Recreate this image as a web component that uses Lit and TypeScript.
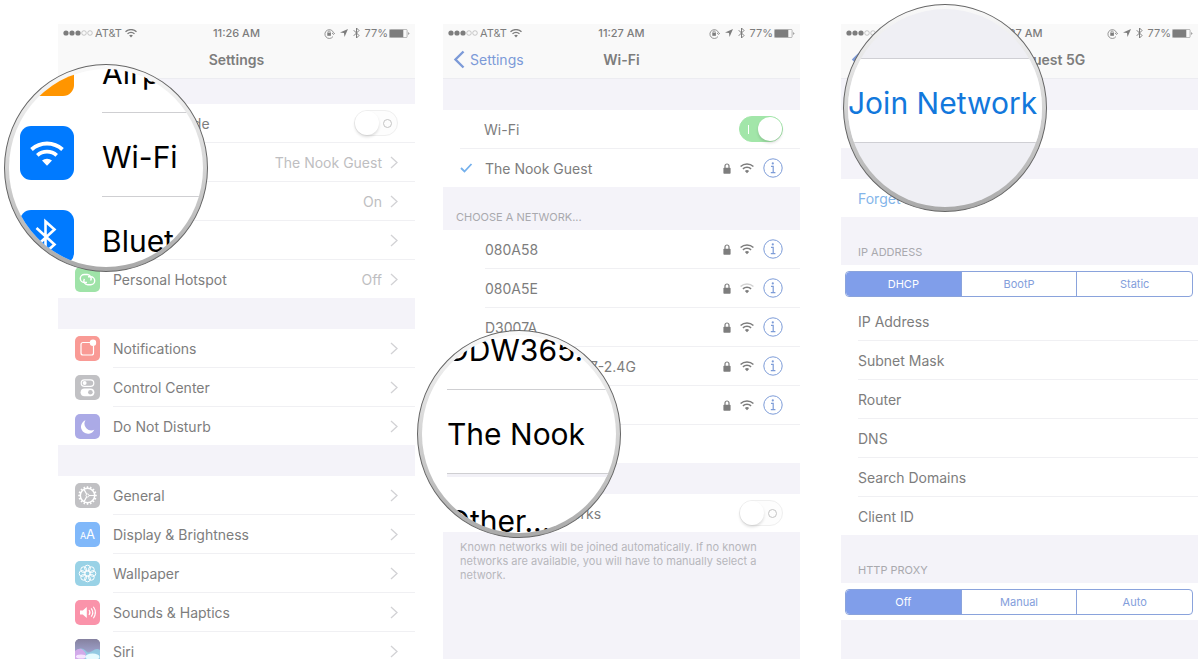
import { LitElement, html, css, svg, nothing } from "lit";
import { customElement, property } from "lit/decorators.js";

const wifi = (weak = false) => html`<svg class="wifi" viewBox="1 2 24 18" aria-hidden="true">
  <path d="M2 7.5a16 16 0 0 1 22 0" fill="none" stroke="currentColor" stroke-width="2.6" opacity=${weak ? 0.35 : 1} />
  <path d="M6 11.7a10.2 10.2 0 0 1 14 0" fill="none" stroke="currentColor" stroke-width="2.6" />
  <path d="M9.3 15.2a5.4 5.4 0 0 1 7.4 0L13 19z" fill="currentColor" />
</svg>`;

const bluetooth = html`<svg class="bt" viewBox="0 0 14 24" aria-hidden="true">
  <path d="M1.5 6.5 12 17l-5 5V2l5 5L1.5 17.5" fill="none" stroke="currentColor" stroke-width="2" />
</svg>`;

const chevron = html`<svg class="chev" viewBox="0 0 8 13" aria-hidden="true">
  <path d="m1 1 6 5.5L1 12" fill="none" stroke="currentColor" stroke-width="1.3" />
</svg>`;

const lock = html`<svg class="lock" viewBox="0 0 8 11" aria-hidden="true">
  <path d="M2 5V3a2 2 0 0 1 4 0v2" fill="none" stroke="currentColor" stroke-width="1.2" />
  <rect x=".4" y="4.7" width="7.2" height="6" rx=".8" fill="currentColor" />
</svg>`;

const teeth = Array.from({ length: 16 }, (_, i) => i * 22.5);
const petals = Array.from({ length: 8 }, (_, i) => (i * Math.PI) / 4);

const glyphs: Record<string, unknown> = {
  airplane: svg`<path d="M5 12.500h15M12.500 5v15" fill="none" stroke="#fff" stroke-width="1.500"/>`,
  wifi: svg`<path d="M5 10.500a11 11 0 0 1 15 0M8 13.500a7 7 0 0 1 9 0" fill="none" stroke="#fff" stroke-width="1.800"/><path d="M10 16a4 4 0 0 1 5 0l-2.500 2.500z" fill="#fff"/>`,
  bluetooth: svg`<path d="m8 8.500 8.500 8-4 3.500V5l4 3.500-8.500 8" fill="none" stroke="#fff" stroke-width="1.300"/>`,
  cellular: svg`<path d="M12.500 11v9M8 6a6 6 0 0 0 0 8M17 6a6 6 0 0 1 0 8" fill="none" stroke="#fff" stroke-width="1.300"/>`,
  hotspot: svg`<g fill="none" stroke="#fff" stroke-width="1.400">
    <path d="M12 15.500H9.300a4 4 0 0 1 0-8h3a4 4 0 0 1 3.300 6"/>
    <path d="M13 9.800h2.700a4 4 0 0 1 0 8h-3a4 4 0 0 1-3.300-6"/></g>`,
  notifications: svg`<path d="M15 6.500H8A2 2 0 0 0 6 8.500v8.500a2 2 0 0 0 2 2h8.500a2 2 0 0 0 2-2V10" fill="none" stroke="#fff" stroke-width="1.200"/>
    <circle cx="18" cy="6.800" r="3.200" fill="#fff"/>`,
  control: svg`<rect x="6.200" y="4.800" width="12.600" height="6.600" rx="3.300" fill="none" stroke="#fff" stroke-width="1.200"/>
    <circle cx="9.600" cy="8.100" r="2" fill="#fff"/>
    <rect x="5.600" y="13.400" width="13.800" height="7.800" rx="3.900" fill="#fff"/><circle cx="15.400" cy="17.300" r="2.300" fill="#c0c0c3"/>`,
  moon: svg`<path d="M10.500 6.200a7 7 0 1 0 8.800 9.600 6.800 6.800 0 0 1-8.800-9.600z" fill="#fff"/>`,
  general: svg`<g fill="none" stroke="#fff">
    <circle cx="12.500" cy="12.500" r="7.200" stroke-width="1.500"/>
    ${teeth.map((a) => svg`<path d="M12.500 3.200v2" stroke-width="1.500" transform="rotate(${a} 12.500 12.500)"/>`)}
    <circle cx="12.500" cy="12.500" r="1.500" stroke-width="1"/>
    <path d="M14 12.500h5.500M11.700 11.200 9 6.400M11.700 13.800 9 18.600" stroke-width="1.200"/></g>`,
  wallpaper: svg`<g fill="none" stroke="#fff" stroke-width="1">
    <circle cx="12.500" cy="12.500" r="2.600"/>
    ${petals.map((a) => svg`<circle cx=${12.5 + 5.4 * Math.cos(a)} cy=${12.5 + 5.4 * Math.sin(a)} r="2.900"/>`)}</g>`,
  sounds: svg`<path d="M5 10.500h2.800l4-3.500v11l-4-3.500H5z" fill="#fff"/>
    <path d="M14 10a4 4 0 0 1 0 5M16.200 8.300a7 7 0 0 1 0 8.400M18.400 6.800a10 10 0 0 1 0 11.400" fill="none" stroke="#fff" stroke-width="1.100"/>`,
  siri: svg`<defs>
      <linearGradient id="sky" x1="0" y1="0" x2="0" y2="1"><stop offset="0" stop-color="#85819f"/><stop offset=".45" stop-color="#9a9cc4"/><stop offset="1" stop-color="#b9c8ea"/></linearGradient>
    </defs><rect width="25" height="25" fill="url(#sky)"/>
    <path d="M0 13c5-6 9-3 12 0s8-6 13-2v14H0z" fill="#8fd6ea" opacity=".75"/>
    <path d="M0 12c5-4 8-2 11 3l-3 10H0z" fill="#d9a6ea" opacity=".9"/>
    <ellipse cx="17.500" cy="18" rx="7" ry="3.400" fill="#e6fbff"/><ellipse cx="6" cy="17.500" rx="5" ry="2" fill="#f6e4ff"/>`,
};

const tints: Record<string, string> = {
  airplane: "#ffc980", wifi: "#80bcff", bluetooth: "#80bcff", cellular: "#9fe3a8", hotspot: "#9fe3a8",
  notifications: "#f99a95", control: "#c1c1c4", moon: "#abaae6", general: "#c1c1c4", display: "#80b8fa",
  wallpaper: "#99d2e6", sounds: "#fa93aa", siri: "#85819f",
};

const sheet = css`
  :host { display: block; font-family: Inter, "Liberation Sans", sans-serif; color: #7d7d7d; }
  * { box-sizing: border-box; }
  ul { list-style: none; margin: 0; padding: 0; }
  a { color: inherit; text-decoration: none; }
  button { font: inherit; color: inherit; background: none; border: 0; padding: 0; }
  svg { display: block; flex: none; }
`;

@customElement("status-head")
export class StatusHead extends LitElement {
  @property() time = "";
  @property() heading = "";
  @property() back = "";
  static styles = [sheet, css`
    :host { background: #f9f9f9; border-bottom: 1px solid #ececf1; height: 55px; }
    .status { display: grid; grid-template-columns: 1fr auto 1fr; align-items: center; height: 18px; padding: 0 5px; font-size: 11px; }
    .side { display: flex; align-items: center; gap: 2px; }
    .right { justify-content: flex-end; gap: 5px; }
    .time { font-weight: 500; }
    .dots { width: 30px; height: 6px; }
    .wifi { width: 12px; height: 9px; margin-left: 1px; }
    .bt { width: 7px; height: 12px; }
    .rot { width: 11px; height: 11px; }
    .arrow { width: 8px; height: 8px; }
    .power { display: flex; align-items: center; gap: 1px; }
    .cell { width: 21px; height: 9px; }
    .bar { display: grid; grid-template-columns: 1fr auto 1fr; align-items: center; height: 35px; padding: 0 10px; font-size: 14px; }
    .back { display: flex; align-items: center; gap: 5px; color: #7c9ad8; }
    .back svg { width: 12px; height: 19px; }
    h2 { grid-column: 2; margin: 0; font-size: 14px; font-weight: 600; }
  `];
  render() {
    return html`<div class="status">
        <div class="side">
          <svg class="dots" viewBox="0 0 30 6" aria-hidden="true">
            ${[3, 9, 15].map((x) => svg`<circle cx=${x} cy="3" r="2.600" fill="#7d7d7d"/>`)}
            ${[21, 27].map((x) => svg`<circle cx=${x} cy="3" r="2.300" fill="none" stroke="#a8a8a8" stroke-width=".6"/>`)}
          </svg>
          <span>AT&amp;T</span>${wifi()}
        </div>
        <span class="time">${this.time}</span>
        <div class="side right">
          <svg class="rot" viewBox="0 0 11 11" aria-hidden="true">
            <path d="M9 8.500A4.400 4.400 0 1 1 9.600 5M8 5.200l1.700 1.200L11 4.800" fill="none" stroke="currentColor" stroke-width=".8"/>
            <rect x="3.300" y="4.800" width="3.600" height="3" fill="currentColor"/><path d="M4 5V4a1.100 1.100 0 0 1 2.200 0v1" fill="none" stroke="currentColor" stroke-width=".7"/>
          </svg>
          <svg class="arrow" viewBox="0 0 8 8" aria-hidden="true"><path d="M8 0 4.500 8 4 4 0 3.500z" fill="currentColor"/></svg>
          ${bluetooth}
          <div class="power"><span>77%</span>
          <svg class="cell" viewBox="0 0 21 9" aria-hidden="true">
            <rect x=".4" y=".4" width="17.700" height="8.200" rx="1" fill="none" stroke="#a5a5a5" stroke-width=".8"/>
            <rect x=".8" y=".8" width="13.500" height="7.400" fill="currentColor"/><path d="M19.300 3v3l1.200-1.500z" fill="currentColor"/>
          </svg></div>
        </div>
      </div>
      <div class="bar">
        ${this.back ? html`<a class="back" href="#"><svg viewBox="0 0 12 19" aria-hidden="true"><path d="M10.500 1.500 2.500 9.500l8 8" fill="none" stroke="currentColor" stroke-width="2.400"/></svg>${this.back}</a>` : nothing}
        <h2>${this.heading}</h2>
      </div>`;
  }
}

@customElement("app-icon")
export class AppIcon extends LitElement {
  @property() name = "";
  static styles = [sheet, css`
    .tile { display: flex; align-items: baseline; justify-content: center; width: 25px; height: 25px; border-radius: 5px; overflow: hidden; color: #fff; line-height: 24px; }
    .small { font-size: 9px; }
    .large { font-size: 13px; }
  `];
  render() {
    return html`<div class="tile" style="background:${tints[this.name]}">
      ${this.name === "display"
        ? html`<span class="small">A</span><span class="large">A</span>`
        : html`<svg width="25" height="25" viewBox="0 0 25 25" aria-hidden="true">${glyphs[this.name]}</svg>`}
    </div>`;
  }
}

@customElement("toggle-switch")
export class ToggleSwitch extends LitElement {
  @property() label = "";
  @property({ type: Boolean }) on = false;
  static styles = [sheet, css`
    .track { display: grid; grid-template: 26px / 44px; }
    .track > * { grid-area: 1 / 1; }
    input { appearance: none; display: flex; align-items: center; margin: 0; width: 44px; height: 26px; border-radius: 13px; background: #fdfdfd; border: 1px solid #efefef; }
    input::before { content: ""; width: 24px; height: 24px; border-radius: 50%; background: #fff; box-shadow: 0 2px 3px #0002; }
    input:checked { background: #a2e6a9; border-color: #a2e6a9; justify-content: flex-end; }
    .mark { align-self: center; justify-self: end; margin-right: 6px; width: 9px; height: 9px; border: 1px solid #c4c4c4; border-radius: 50%; pointer-events: none; }
    .on .mark { justify-self: start; margin-left: 9px; width: 1px; border: 0; border-radius: 0; background: #fff; }
  `];
  render() {
    return html`<div class="track ${this.on ? "on" : ""}">
      <input type="checkbox" role="switch" aria-label=${this.label} .checked=${this.on} /><span class="mark"></span>
    </div>`;
  }
}

@customElement("magnifier-lens")
export class MagnifierLens extends LitElement {
  static styles = [sheet, css`
    .rim { width: 204px; height: 208px; padding: 4px; border: 1px solid #666; border-radius: 50%; background: linear-gradient(#fafafa, #d8d8d8 45%, #a9a9a9); }
    .glass { height: 100%; border-radius: 50%; overflow: hidden; background: #fff; color: #000; }
  `];
  render() {
    return html`<div class="rim"><div class="glass"><slot></slot></div></div>`;
  }
}

@customElement("app-root")
export class AppRoot extends LitElement {
  static styles = [sheet, css`
    :host { background: #fff; }
    .stage { display: flex; gap: 28px; height: 100vh; padding: 24px 2px 3px 58px; overflow: hidden; }
    .phone { flex: 1 1 0; min-width: 0; position: relative; }
    .phone.last { margin-left: 13px; }
    .screen { display: flex; flex-direction: column; height: 100%; overflow: hidden; background: #f4f3f9; }
    .screen > * { flex: none; }
    .group { background: #fff; font-size: 14px; }
    .after-bar { margin-top: 25px; }
    .spaced { margin-top: 31px; }
    .phone.last .spaced { margin-top: 31px; }
    .row { display: flex; align-items: center; height: 39px; }
    li:last-child .row { height: 38px; }
    .main { padding-left: 17px; gap: 13px; }
    .body { flex: 1; display: flex; align-items: center; gap: 8px; height: 100%; padding-right: 17px; border-bottom: 1px solid #f0f0f3; }
    li:last-child .body { border-bottom: 0; }
    .name { flex: 1; white-space: nowrap; }
    .value { color: #bebec1; }
    .chev { width: 8px; height: 13px; color: #d2d2d5; }
    .net { padding-left: 17px; }
    .tick { width: 25px; height: 12px; color: #74b0ec; }
    .net .body { gap: 9px; }
    .switch-row { padding-left: 17px; }
    .indent { padding-left: 24px; }
    .lock { width: 8px; height: 11px; }
    .wifi { width: 14px; height: 11px; }
    .info { width: 20px; height: 20px; color: #7d9cd8; }
    .label { margin: 0; font-size: 11px; font-weight: 400; line-height: 14px; color: #a9a9ae; }
    .label.choose { padding: 23px 13px 6px; }
    .label.config { padding: 28px 17px 6px; }
    .note { margin: 0; padding: 8px 17px; font-size: 11px; line-height: 14px; color: #b7b7bc; }
    .link { color: #84b5ea; }
    .plain { padding-left: 17px; }
    .segments { display: flex; height: 26px; margin: 0; padding: 0; border: 1px solid #8aa3dc; border-radius: 4px; overflow: hidden; font-size: 11px; color: #839edb; }
    .seg-wrap { padding: 6px 5px 5px 4px; }
    .segments label { flex: 1; display: grid; place-items: center; }
    .segments label + label { border-left: 1px solid #8aa3dc; }
    .segments label:has(input:checked) { background: #809eea; color: #fff; }
    .segments input { appearance: none; margin: 0; width: 0; height: 0; grid-area: 1 / 1; }
    .segments span { grid-area: 1 / 1; }
    .lens { position: absolute; }
    .lens-home { left: -54px; top: 40px; }
    .lens-list { left: -26px; top: 306px; }
    .lens-join { left: 2px; top: -20px; }
    .zoomed { font-size: 30px; white-space: nowrap; }
    .zoomed li { display: flex; align-items: center; height: 84px; }
    .zoomed .text { flex: 1; display: flex; align-items: center; height: 84px; padding-top: 5px; border-bottom: 1px solid #cfcfd2; }
    .home { margin-top: -40px; padding-left: 11px; }
    .home li { gap: 28px; }
    .home svg { border-radius: 11px; margin-bottom: 4px; }
    .list { margin-top: -29px; padding-left: 25px; }
    .list li:nth-child(2) { height: 87px; border-bottom: 3px solid #f2f1f7; }
    .join { height: 100%; background: #efeff4; padding-top: 49px; }
    .join button { display: block; width: 100%; height: 85px; padding: 4px 8px 0 0; background: #fff; border: solid #cfcfd4; border-width: 1px 0; color: #1278dc; text-align: center; }
  `];

  private entry(icon: string, name: string, value = "") {
    return html`<li><a class="row main" href="#"><app-icon name=${icon}></app-icon>
      <span class="body"><span class="name">${name}</span><span class="value">${value}</span>${chevron}</span></a></li>`;
  }

  private network(name: string, joined = false, weak = false) {
    return html`<li><div class="row net">
      <svg class="tick" viewBox="0 0 25 12" aria-hidden="true">${joined ? svg`<path d="m1 6 3.500 3.500 7-7.500" fill="none" stroke="currentColor" stroke-width="1.800"/>` : nothing}</svg>
      <span class="body"><span class="name">${name}</span>${lock}${wifi(weak)}
      <button class="info" aria-label="About ${name}"><svg viewBox="0 0 20 20" aria-hidden="true">
        <circle cx="10" cy="10" r="9.200" fill="none" stroke="currentColor"/><circle cx="9.800" cy="5.400" r="1.100" fill="currentColor"/>
        <path d="M8 8.400h2.200v6M7.800 14.600h4.600" fill="none" stroke="currentColor" stroke-width="1.200"/></svg></button></span></div></li>`;
  }

  private segments(name: string, options: string[]) {
    return html`<div class="seg-wrap"><fieldset class="segments" aria-label=${name}>
      ${options.map((o, i) => html`<label><input type="radio" name=${name} ?checked=${i === 0} /><span>${o}</span></label>`)}
    </fieldset></div>`;
  }

  render() {
    return html`<main class="stage">
      <section class="phone">
        <div class="screen">
          <status-head time="11:26 AM" heading="Settings"></status-head>
          <ul class="group after-bar">
            <li><div class="row main"><app-icon name="airplane"></app-icon><span class="body"><span class="name">Airplane Mode</span><toggle-switch label="Airplane Mode"></toggle-switch></span></div></li>
            ${this.entry("wifi", "Wi-Fi", "The Nook Guest")}
            ${this.entry("bluetooth", "Bluetooth", "On")}
            ${this.entry("cellular", "Cellular")}
            ${this.entry("hotspot", "Personal Hotspot", "Off")}
          </ul>
          <ul class="group spaced">
            ${this.entry("notifications", "Notifications")}
            ${this.entry("control", "Control Center")}
            ${this.entry("moon", "Do Not Disturb")}
          </ul>
          <ul class="group spaced">
            ${this.entry("general", "General")}
            ${this.entry("display", "Display & Brightness")}
            ${this.entry("wallpaper", "Wallpaper")}
            ${this.entry("sounds", "Sounds & Haptics")}
            ${this.entry("siri", "Siri")}
          </ul>
        </div>
        <magnifier-lens class="lens lens-home" aria-hidden="true">
          <ul class="zoomed home">
            <li><svg width="54" height="54" viewBox="0 0 54 54"><rect width="54" height="54" fill="#ff9500"/></svg><span class="text">Airp</span></li>
            <li><svg width="54" height="54" viewBox="0 0 54 54"><rect width="54" height="54" fill="#007aff"/>
              <path d="M11.500 23.500a23 23 0 0 1 31 0M17.300 29.300a14.500 14.500 0 0 1 19.400 0" fill="none" stroke="#fff" stroke-width="3.800"/><path d="M22 34.600a7.500 7.500 0 0 1 10 0L27 39.800z" fill="#fff"/></svg><span class="text">Wi-Fi</span></li>
            <li><svg width="54" height="54" viewBox="0 0 54 54"><rect width="54" height="54" fill="#007aff"/>
              <path d="m16.500 18 18 16.500-9 8V11.500l9 8-18 16.500" fill="none" stroke="#fff" stroke-width="2.600"/></svg><span class="text">Bluet</span></li>
          </ul>
        </magnifier-lens>
      </section>

      <section class="phone">
        <div class="screen">
          <status-head time="11:27 AM" heading="Wi-Fi" back="Settings"></status-head>
          <ul class="group spaced">
            <li><div class="row switch-row"><span class="body indent"><span class="name">Wi-Fi</span><toggle-switch label="Wi-Fi" on></toggle-switch></span></div></li>
            ${this.network("The Nook Guest", true)}
          </ul>
          <h3 class="label choose">CHOOSE A NETWORK...</h3>
          <ul class="group">
            ${this.network("080A58")}
            ${this.network("080A5E", false, true)}
            ${this.network("D3007A")}
            ${this.network("DDW365.DDM07-2.4G")}
            ${this.network("The Nook")}
            <li><a class="row net" href="#"><span class="tick"></span><span class="body">Other...</span></a></li>
          </ul>
          <ul class="group spaced">
            <li><div class="row switch-row"><span class="body"><span class="name">Ask to Join Networks</span><toggle-switch label="Ask to Join Networks"></toggle-switch></span></div></li>
          </ul>
          <p class="note">Known networks will be joined automatically. If no known networks are available, you will have to manually select a network.</p>
        </div>
        <magnifier-lens class="lens lens-list" aria-hidden="true">
          <ul class="zoomed list">
            <li><span class="text">DDW365.</span></li>
            <li><span class="text">The Nook</span></li>
            <li><span class="text">Other...</span></li>
          </ul>
        </magnifier-lens>
      </section>

      <section class="phone last">
        <div class="screen">
          <status-head time="11:27 AM" heading="The Nook Guest 5G" back="Wi-Fi"></status-head>
          <ul class="group spaced"><li><button class="row plain link">Join Network</button></li></ul>
          <ul class="group spaced"><li><button class="row plain link">Forget Network</button></li></ul>
          <h3 class="label config">IP ADDRESS</h3>
          <div class="group">
            ${this.segments("IP Address", ["DHCP", "BootP", "Static"])}
            <ul>
              ${["IP Address", "Subnet Mask", "Router", "DNS", "Search Domains", "Client ID"].map((n) => html`<li><div class="row plain"><span class="body">${n}</span></div></li>`)}
            </ul>
          </div>
          <h3 class="label config">HTTP PROXY</h3>
          <div class="group">${this.segments("HTTP Proxy", ["Off", "Manual", "Auto"])}</div>
        </div>
        <magnifier-lens class="lens lens-join">
          <div class="zoomed join"><button>Join Network</button></div>
        </magnifier-lens>
      </section>
    </main>`;
  }
}
